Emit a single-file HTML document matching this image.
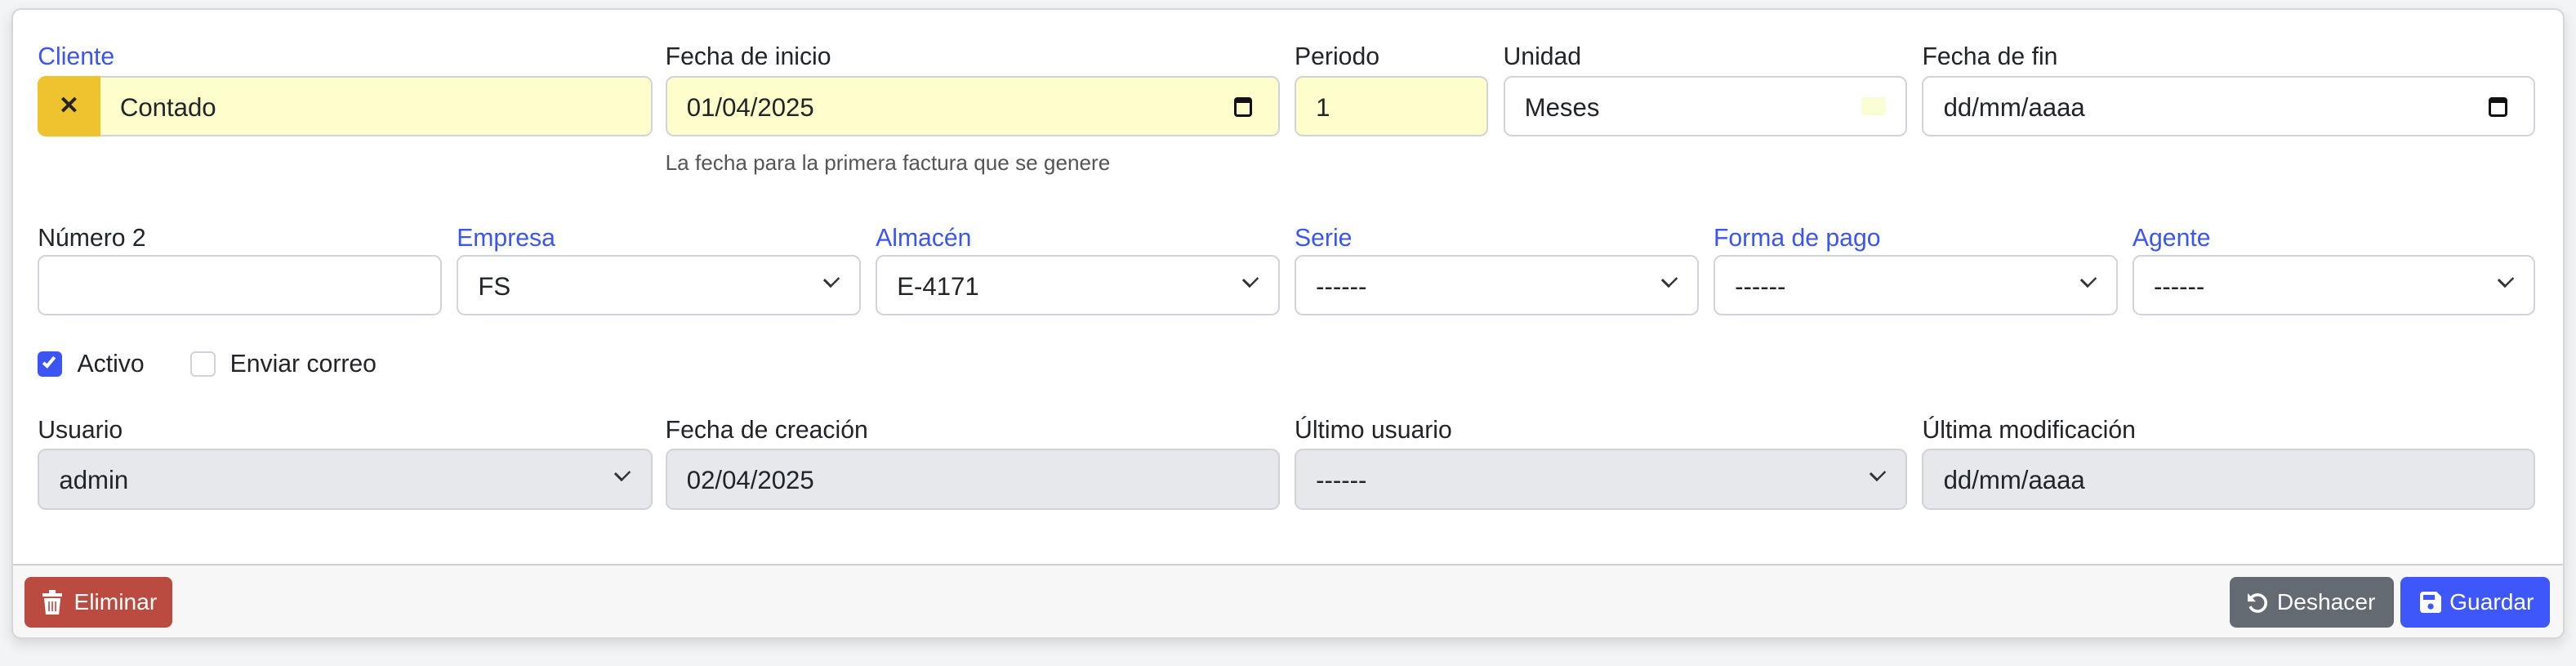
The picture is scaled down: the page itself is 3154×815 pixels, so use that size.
<!DOCTYPE html>
<html><head><meta charset="utf-8"><style>
*{box-sizing:border-box;margin:0;padding:0}
html,body{width:3154px;height:814px;overflow:hidden;background:#f3f4f6}
#w{position:absolute;left:0;top:0;width:1568px;height:405px;zoom:2.0115;font-family:"Liberation Sans",sans-serif;color:#212529;font-size:15px}
.card{position:absolute;left:7px;top:5px;width:1554px;height:384px;background:#fff;border:1px solid #d5d6d8;border-radius:6px;box-shadow:0 3px 8px rgba(0,0,0,.12);overflow:hidden}
.foot{position:absolute;left:0;right:0;top:337px;bottom:0;background:#f7f7f7;border-top:1px solid #d3d3d3}
.l{position:absolute;font-size:15px;line-height:18px;margin-top:1px}
.b{color:#3b55f5}
.i{position:absolute;height:37px;border:1px solid #d0d4d9;border-radius:5px;background:#fff;padding-left:12px;line-height:37px;font-size:15.5px}
.y{background:#fdfecb}
.g{background:#e7e8ec}
.ch{position:absolute;right:13px;top:13px;width:8px;height:8px;border-right:1.5px solid #333;border-bottom:1.5px solid #333;transform:rotate(45deg) scaleX(.8);top:10px}
.cal{position:absolute;right:16px;top:12px;width:11px;height:12px;border:1.8px solid #111;border-top-width:3.5px;border-radius:2px}
.btn{position:absolute;top:351px;height:31px;border-radius:4px;color:#fff;font-size:14px;line-height:31px}
</style></head><body><div id="w">
<div class="card">
<div class="foot"></div>
</div>
<!-- row1 -->
<div class="l b" style="left:23px;top:25px">Cliente</div>
<div class="l" style="left:405px;top:25px">Fecha de inicio</div>
<div class="l" style="left:788px;top:25px">Periodo</div>
<div class="l" style="left:915px;top:25px">Unidad</div>
<div class="l" style="left:1170px;top:25px">Fecha de fin</div>
<div class="i y" style="left:23px;top:46px;width:374px;padding-left:49px">Contado</div>
<div style="position:absolute;left:23px;top:46px;width:38px;height:37px;background:#efc22f;border-radius:5px 0 0 5px;text-align:center;line-height:37px;font-size:15px;font-weight:bold">✕</div>
<div class="i y" style="left:405px;top:46px;width:374px">01/04/2025<div class="cal"></div></div>
<div class="i y" style="left:788px;top:46px;width:118px">1</div>
<div class="i" style="left:915px;top:46px;width:246px">Meses<div style="position:absolute;right:12px;top:12px;width:15px;height:11px;background:#fbfdd5"></div></div>
<div class="i" style="left:1170px;top:46px;width:373px">dd/mm/aaaa<div class="cal"></div></div>
<div class="l" style="left:405px;top:89px;font-size:13px;color:#555">La fecha para la primera factura que se genere</div>
<!-- row2 -->
<div class="l" style="left:23px;top:135px">Número 2</div>
<div class="l b" style="left:278px;top:135px">Empresa</div>
<div class="l b" style="left:533px;top:135px">Almacén</div>
<div class="l b" style="left:788px;top:135px">Serie</div>
<div class="l b" style="left:1043px;top:135px">Forma de pago</div>
<div class="l b" style="left:1298px;top:135px">Agente</div>
<div class="i" style="left:23px;top:155px;width:246px"></div>
<div class="i" style="left:278px;top:155px;width:246px">FS<div class="ch"></div></div>
<div class="i" style="left:533px;top:155px;width:246px">E-4171<div class="ch"></div></div>
<div class="i" style="left:788px;top:155px;width:246px">------<div class="ch"></div></div>
<div class="i" style="left:1043px;top:155px;width:246px">------<div class="ch"></div></div>
<div class="i" style="left:1298px;top:155px;width:245px">------<div class="ch"></div></div>
<!-- checks -->
<div style="position:absolute;left:23px;top:214px;width:15px;height:15px;background:#3b55f5;border-radius:3px"><div style="position:absolute;left:5px;top:2px;width:4px;height:8px;border-right:2px solid #fff;border-bottom:2px solid #fff;transform:rotate(40deg)"></div></div>
<div class="l" style="left:47px;top:212px">Activo</div>
<div style="position:absolute;left:116px;top:214px;width:15px;height:15px;border:1px solid #d0d4d9;border-radius:3px;background:#fff"></div>
<div class="l" style="left:140px;top:212px">Enviar correo</div>
<!-- row4 -->
<div class="l" style="left:23px;top:252px">Usuario</div>
<div class="l" style="left:405px;top:252px">Fecha de creación</div>
<div class="l" style="left:788px;top:252px">Último usuario</div>
<div class="l" style="left:1170px;top:252px">Última modificación</div>
<div class="i g" style="left:23px;top:273px;width:374px">admin<div class="ch"></div></div>
<div class="i g" style="left:405px;top:273px;width:374px">02/04/2025</div>
<div class="i g" style="left:788px;top:273px;width:373px">------<div class="ch"></div></div>
<div class="i g" style="left:1170px;top:273px;width:373px">dd/mm/aaaa</div>
<!-- buttons -->
<div class="btn" style="left:15px;width:90px;background:#bb4a40;padding-left:30px">Eliminar
<svg style="position:absolute;left:11px;top:8px" width="12" height="15" viewBox="0 0 12 15"><rect x="0" y="2" width="12" height="2" fill="#fff"/><rect x="4" y="0" width="4" height="2" fill="#fff"/><path d="M1 5h10l-1 10H2z" fill="#fff"/><path d="M4 7v6M6 7v6M8 7v6" stroke="#bb4a40" stroke-width=".8"/></svg></div>
<div class="btn" style="left:1357px;width:100px;background:#646a71;padding-left:29px">Deshacer
<svg style="position:absolute;left:10px;top:9px" width="13" height="13" viewBox="0 0 13 13"><path d="M3 4A5 5 0 1 1 2.5 9" fill="none" stroke="#fff" stroke-width="1.8"/><path d="M1 1v5h5z" fill="#fff"/></svg></div>
<div class="btn" style="left:1461px;width:91px;background:#3d57fa;padding-left:30px">Guardar
<svg style="position:absolute;left:12px;top:9px" width="13" height="13" viewBox="0 0 13 13"><path d="M0 2a2 2 0 0 1 2-2h8l3 3v8a2 2 0 0 1-2 2H2a2 2 0 0 1-2-2z" fill="#fff"/><rect x="2" y="2" width="7" height="3" fill="#3d57fa"/><circle cx="6.5" cy="9" r="1.8" fill="#3d57fa"/></svg></div>
</div></body></html>
